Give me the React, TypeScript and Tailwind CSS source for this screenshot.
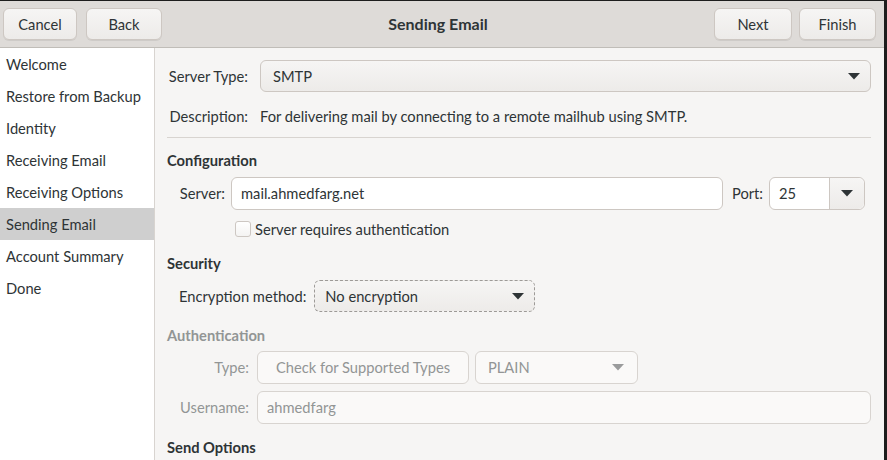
import React from "react";

const font = { fontFamily: "Lato, 'Open Sans', sans-serif" };

const Arrow = ({ muted }: { muted?: boolean }) => (
  <svg width="12" height="7" viewBox="0 0 12 7">
    <path d="M0 0 L12 0 L6 6.5 Z" fill={muted ? "#9a9b9c" : "#2e3436"} />
  </svg>
);

const HeaderButton = ({ label, width }: { label: string; width: string }) => (
  <button
    className={`${width} h-[32px] rounded-[6px] border border-[#cdc7c2] bg-gradient-to-b from-[#f6f5f4] to-[#edebe9] text-[14.7px] text-[#2e3436] shadow-[0_1px_0_rgba(0,0,0,0.07)]`}
  >
    {label}
  </button>
);

const steps = [
  "Welcome",
  "Restore from Backup",
  "Identity",
  "Receiving Email",
  "Receiving Options",
  "Sending Email",
  "Account Summary",
  "Done",
];

export default function App() {
  return (
    <div
      className="w-[887px] h-[460px] overflow-hidden bg-[#1d1d1d] pt-px text-[14.7px] text-[#2e3436]"
      style={font}
    >
      <div className="w-[884px] h-[459px] flex flex-col bg-[#f6f5f4]">
        {/* header bar */}
        <div className="h-[47px] shrink-0 flex items-center bg-[#dedbd8] border-b border-[#c0bdb8] pl-[3px] pr-[8px]">
          <div className="flex gap-[9px]">
            <HeaderButton label="Cancel" width="w-[74px]" />
            <HeaderButton label="Back" width="w-[76px]" />
          </div>
          <div className="flex-1 text-center font-bold text-[16px]">Sending Email</div>
          <div className="flex gap-[7px]">
            <HeaderButton label="Next" width="w-[78px]" />
            <HeaderButton label="Finish" width="w-[77px]" />
          </div>
        </div>

        <div className="flex flex-1 min-h-0">
          {/* sidebar */}
          <div className="w-[155px] shrink-0 bg-white border-r border-[#d8d4d0]">
            {steps.map((s) => (
              <div
                key={s}
                className={`h-8 flex items-center px-[6px] ${
                  s === "Sending Email" ? "bg-[#cfcfcf]" : ""
                }`}
              >
                {s}
              </div>
            ))}
          </div>

          {/* main page */}
          <div className="flex-1 pl-3 pr-[13px] pt-3 flex flex-col">
            <div className="flex items-center h-8">
              <div className="w-[81px] text-right">Server Type:</div>
              <div className="ml-3 flex-1 h-8 flex items-center justify-between rounded-[6px] border border-[#cdc7c2] bg-gradient-to-b from-[#f6f5f4] to-[#edebe9] pl-3 pr-[10px]">
                <span>SMTP</span>
                <Arrow />
              </div>
            </div>

            <div className="flex items-center h-5 mt-[14px]">
              <div className="w-[81px] text-right">Description:</div>
              <div className="ml-3">For delivering mail by connecting to a remote mailhub using SMTP.</div>
            </div>

            <div className="h-px bg-[#d8d4d0] mt-[11px]" />

            <div className="h-5 mt-[12px] flex items-center font-bold">Configuration</div>

            <div className="flex items-center h-[33px] mt-[7px] pl-3">
              <div className="w-[46px] text-right">Server:</div>
              <div className="ml-[6px] flex-1 h-[33px] flex items-center rounded-[6px] border border-[#cdc7c2] bg-white px-[9px]">
                mail.ahmedfarg.net
              </div>
              <div className="ml-[9px]">Port:</div>
              <div className="ml-[6px] mr-[6px] w-[96px] h-[33px] flex rounded-[6px] border border-[#cdc7c2] bg-white">
                <div className="flex-1 flex items-center px-[9px]">25</div>
                <div className="w-[35px] flex items-center justify-center border-l border-[#cdc7c2] rounded-r-[6px] bg-gradient-to-b from-[#f6f5f4] to-[#edebe9]">
                  <Arrow />
                </div>
              </div>
            </div>

            <div className="flex items-center h-5 mt-[9px] pl-[68px]">
              <div className="w-4 h-4 rounded-[3px] border border-[#cdc7c2] bg-gradient-to-b from-white to-[#f4f3f2]" />
              <span className="ml-[4px]">Server requires authentication</span>
            </div>

            <div className="h-5 mt-[14px] flex items-center font-bold">Security</div>

            <div className="flex items-center h-8 mt-[7px] pl-3">
              <div>Encryption method:</div>
              <div className="ml-[8px] w-[221px] h-8 flex items-center justify-between rounded-[6px] border border-dashed border-[#9d9a97] bg-gradient-to-b from-[#f6f5f4] to-[#edebe9] pl-[10px] pr-[10px]">
                <span>No encryption</span>
                <Arrow />
              </div>
            </div>

            <div className="h-5 mt-[13px] flex items-center font-bold text-[#929595]">Authentication</div>

            <div className="flex items-center h-[33px] mt-[6px] pl-3 text-[#929595]">
              <div className="w-[70px] text-right">Type:</div>
              <div className="ml-2 w-[212px] h-[33px] flex items-center justify-center rounded-[6px] border border-[#d8d4d0] bg-[#faf9f8]">
                Check for Supported Types
              </div>
              <div className="ml-[6px] w-[163px] h-[33px] flex items-center justify-between rounded-[6px] border border-[#d8d4d0] bg-[#faf9f8] pl-3 pr-[13px]">
                <span>PLAIN</span>
                <Arrow muted />
              </div>
            </div>

            <div className="flex items-center h-[33px] mt-[7px] pl-3 text-[#929595]">
              <div className="w-[70px] text-right">Username:</div>
              <div className="ml-2 flex-1 h-[33px] flex items-center rounded-[6px] border border-[#d8d4d0] bg-[#faf9f8] px-[9px]">
                ahmedfarg
              </div>
            </div>

            <div className="h-5 mt-[13px] flex items-center font-bold">Send Options</div>
          </div>
        </div>
      </div>
    </div>
  );
}
